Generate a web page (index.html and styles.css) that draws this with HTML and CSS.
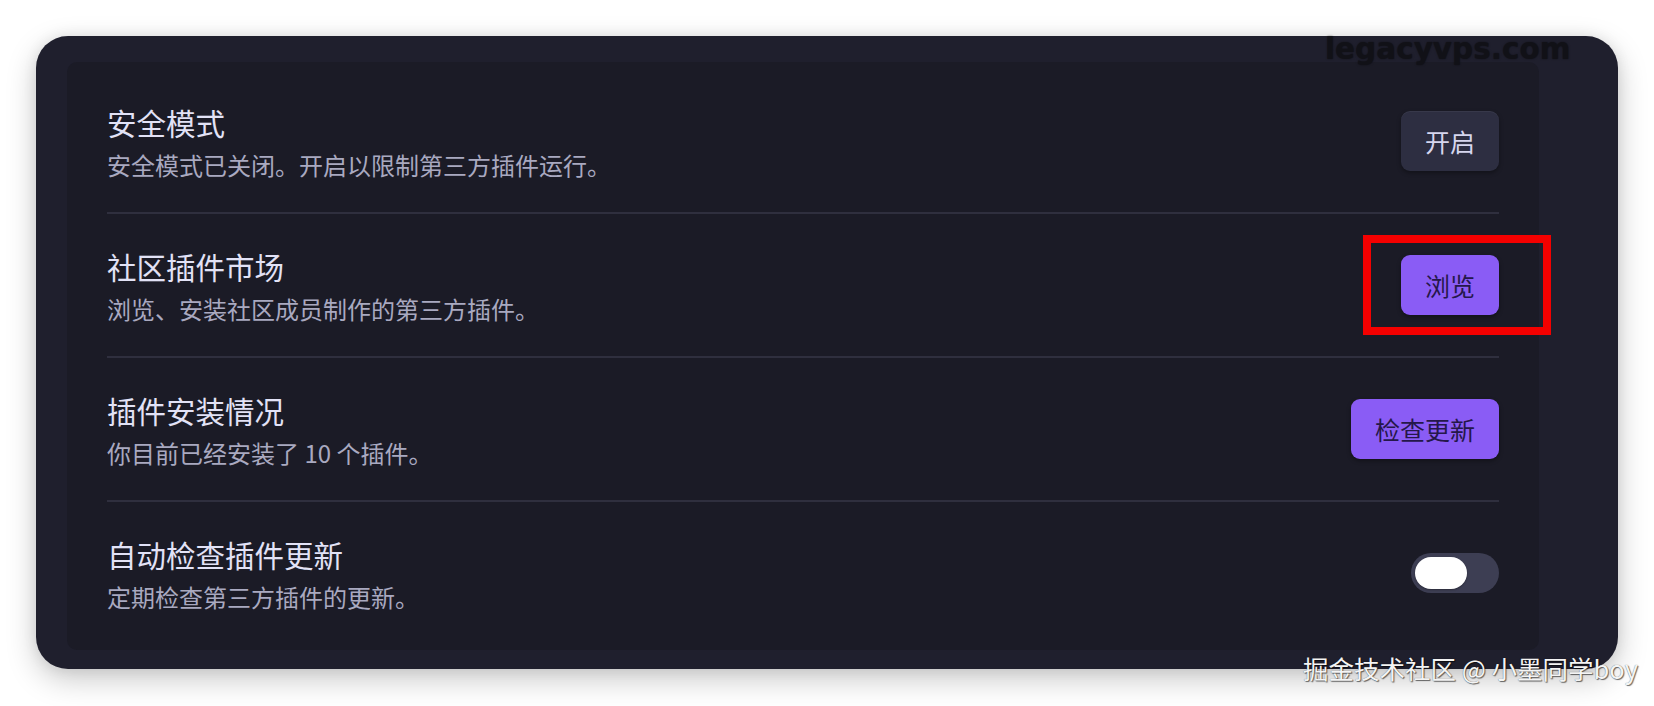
FILE: index.html
```html
<!DOCTYPE html>
<html lang="zh-CN">
<head>
<meta charset="utf-8">
<title>第三方插件</title>
<link rel="stylesheet" href="styles.css">
</head>
<body>
<div class="page">
  <div class="modal">
    <div class="panel">
      <div class="row">
        <div class="info">
          <div class="name">安全模式</div>
          <div class="desc">安全模式已关闭。开启以限制第三方插件运行。</div>
        </div>
        <div class="control">
          <button class="btn">开启</button>
        </div>
      </div>
      <div class="row">
        <div class="info">
          <div class="name">社区插件市场</div>
          <div class="desc">浏览、安装社区成员制作的第三方插件。</div>
        </div>
        <div class="control marked">
          <button class="btn cta">浏览</button>
          <span class="mark"></span>
        </div>
      </div>
      <div class="row">
        <div class="info">
          <div class="name">插件安装情况</div>
          <div class="desc">你目前已经安装了 10 个插件。</div>
        </div>
        <div class="control">
          <button class="btn cta">检查更新</button>
        </div>
      </div>
      <div class="row last">
        <div class="info">
          <div class="name">自动检查插件更新</div>
          <div class="desc">定期检查第三方插件的更新。</div>
        </div>
        <div class="control">
          <div class="toggle"><span class="knob"></span></div>
        </div>
      </div>
    </div>
  </div>
  <div class="wm-top">legacyvps.com</div>
  <div class="wm-bottom">掘金技术社区 @ 小墨同学boy</div>
</div>
</body>
</html>
```

FILE: styles.css
```css
html, body {
  margin: 0;
  padding: 0;
  background: #ffffff;
}
body {
  width: 1654px;
  height: 706px;
  overflow: hidden;
  font-family: "Noto Sans CJK SC", "Noto Sans", sans-serif;
}
.page {
  position: relative;
  width: 1654px;
  height: 706px;
  padding: 36px 0 0 36px;
  box-sizing: border-box;
}
.modal {
  width: 1582px;
  height: 633px;
  box-sizing: border-box;
  padding: 26px 79px 19px 31px;
  background: #1f1f2d;
  border-radius: 32px;
  box-shadow: 0 10px 30px rgba(0, 0, 0, 0.22), 0 0 14px rgba(0, 0, 0, 0.08);
}
.panel {
  width: 1472px;
  height: 588px;
  box-sizing: border-box;
  padding: 8px 40px 0 40px;
  background: #1b1b26;
  border-radius: 10px;
  display: flex;
  flex-direction: column;
}
.row {
  display: flex;
  align-items: center;
  justify-content: space-between;
  padding: 30px 0 30px 0;
  border-bottom: 2px solid #2f2f3e;
}
.row.last {
  border-bottom: none;
}
.info {
  display: flex;
  flex-direction: column;
  gap: 4px;
}
.name {
  font-size: 29.5px;
  line-height: 44px;
  font-weight: 400;
  color: #e2e2f6;
}
.desc {
  font-size: 24px;
  line-height: 34px;
  color: #a9a9c0;
}
.control {
  display: flex;
  align-items: center;
}
.marked {
  position: relative;
}
.btn {
  height: 60px;
  padding: 0 24px;
  border: none;
  border-radius: 9px;
  font-family: "Noto Sans CJK SC", "Noto Sans", sans-serif;
  font-size: 25px;
  color: #d6d6ee;
  background: #2d2e41;
  box-shadow: 0 1px 0 rgba(255, 255, 255, 0.05) inset, 0 2px 4px rgba(0, 0, 0, 0.35);
}
.btn.cta {
  background: #8a5cf5;
  color: #25174a;
  box-shadow: 0 2px 4px rgba(0, 0, 0, 0.35);
}
.mark {
  position: absolute;
  left: -38px;
  right: -52px;
  top: -20px;
  bottom: -20px;
  border: 8px solid #f40000;
}
.toggle {
  width: 88px;
  height: 40px;
  border-radius: 20px;
  background: #3d3e53;
  box-sizing: border-box;
  padding: 4px;
  display: flex;
}
.knob {
  width: 52px;
  height: 32px;
  border-radius: 16px;
  background: #ffffff;
  box-shadow: 0 1px 2px rgba(0, 0, 0, 0.3);
}
.wm-top {
  position: absolute;
  left: 1325px;
  top: 33px;
  font-family: "DejaVu Sans", sans-serif;
  font-weight: bold;
  font-size: 29.5px;
  line-height: 32px;
  color: #111117;
  text-shadow: 0 0 2px rgba(0, 0, 0, 0.5);
}
.wm-bottom {
  position: absolute;
  left: 1303px;
  top: 655px;
  font-size: 25.5px;
  line-height: 26px;
  color: #f4f4f4;
  white-space: nowrap;
  text-shadow: 1px 1px 1px rgba(0, 0, 0, 0.55), 0 0 1px rgba(0, 0, 0, 0.6);
}
```
